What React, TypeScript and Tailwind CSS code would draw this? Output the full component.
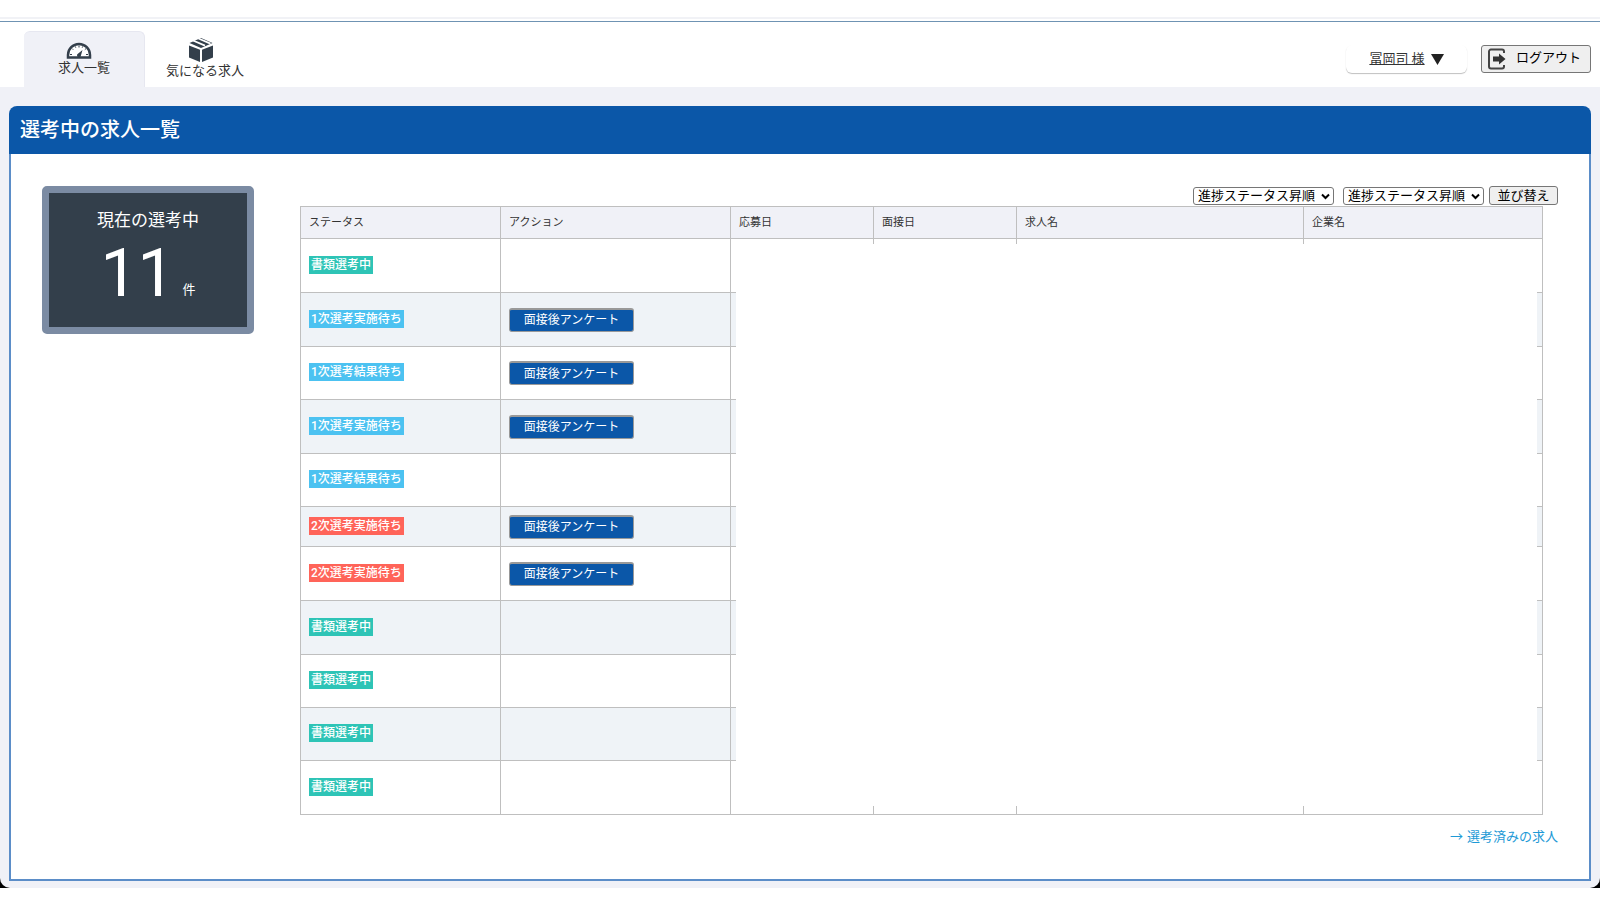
import { useState } from "react";

type Stage = "document" | "first" | "second";

type Row = {
  label: string;
  stage: Stage;
  survey: boolean;
  height: string;
};

const rows: Row[] = [
  { label: "書類選考中", stage: "document", survey: false, height: "h-[54px]" },
  { label: "1次選考実施待ち", stage: "first", survey: true, height: "h-[54px]" },
  { label: "1次選考結果待ち", stage: "first", survey: true, height: "h-[53px]" },
  { label: "1次選考実施待ち", stage: "first", survey: true, height: "h-[54px]" },
  { label: "1次選考結果待ち", stage: "first", survey: false, height: "h-[53px]" },
  { label: "2次選考実施待ち", stage: "second", survey: true, height: "h-[40px]" },
  { label: "2次選考実施待ち", stage: "second", survey: true, height: "h-[54px]" },
  { label: "書類選考中", stage: "document", survey: false, height: "h-[54px]" },
  { label: "書類選考中", stage: "document", survey: false, height: "h-[53px]" },
  { label: "書類選考中", stage: "document", survey: false, height: "h-[53px]" },
  { label: "書類選考中", stage: "document", survey: false, height: "h-[54px]" },
];

const stageColors: Record<Stage, string> = {
  document: "bg-[#2ec4b6]",
  first: "bg-[#4cc2f1]",
  second: "bg-[#ff6459]",
};

const columns = [
  { name: "ステータス", width: "w-[200px]" },
  { name: "アクション", width: "w-[230px]" },
  { name: "応募日", width: "w-[143px]" },
  { name: "面接日", width: "w-[143px]" },
  { name: "求人名", width: "w-[287px]" },
  { name: "企業名", width: "" },
];

const GaugeIcon = () => (
  <svg className="mr-2.5" width="26" height="18" viewBox="0 0 26 18" fill="none" aria-hidden="true">
    <path d="M2 15.500V13a11 11 0 0 1 22 0v2.500z" fill="#fff" stroke="#333f4b" strokeWidth="2.500" />
    <path d="M13 3.500v2M6 6.500l1.200 1.200M20 6.500l-1.200 1.200M4 12.500h2M20 12.500h2M9.200 4.300l.6 1.400M16.800 4.300l-.6 1.400" stroke="#333f4b" strokeWidth="1" />
    <path d="M16.500 8l-1.500 5.300a2 2 0 1 1-2.800-1.800z" fill="#333f4b" />
  </svg>
);

const BoxIcon = () => (
  <svg className="mr-2" width="26" height="26" viewBox="0 0 26 26" fill="#333f4b" aria-hidden="true">
    <path d="M1 8.500l11 4.300V25L1 20.500z" />
    <path d="M25 8.500l-11 4.300V25l11-4.500z" />
    <path d="M13 1l11.500 5L13 11 1.500 6z" />
    <path d="M5 3.500l12 5.200M10.500 1.500l12 5.200" stroke="#fff" strokeWidth="1.800" />
  </svg>
);

const LogoutIcon = () => (
  <svg width="18" height="22" viewBox="0 0 18 22" fill="none" aria-hidden="true">
    <path d="M16 5V3.500A2 2 0 0 0 14 1.500H3a2 2 0 0 0-2 2v15a2 2 0 0 0 2 2h11a2 2 0 0 0 2-2V17" stroke="#444" strokeWidth="2" />
    <path d="M5 8.500h6V5.500l6.500 5.500-6.500 5.500v-3H5z" fill="#333" />
  </svg>
);

const SortSelect = ({ label }: { label: string }) => {
  const [value, setValue] = useState("status_asc");

  return (
    <div className="relative flex">
      <select
        aria-label={label}
        value={value}
        onChange={(e) => setValue(e.target.value)}
        className="h-[18px] w-[141px] appearance-none rounded-[3px] border border-[#767676] bg-white pl-1 text-[13px] leading-4 text-black"
      >
        <option value="status_asc">進捗ステータス昇順</option>
        <option value="status_desc">進捗ステータス降順</option>
      </select>
      <svg className="pointer-events-none absolute right-1 top-1.5" width="9" height="7" viewBox="0 0 9 7" fill="none" aria-hidden="true">
        <path d="M1 1.500l3.500 3.500L8 1.500" stroke="#000" strokeWidth="2" />
      </svg>
    </div>
  );
};

const Header = () => (
  <header className="bg-white pt-[17px]">
    <div className="h-[5px] border-b border-t-2 border-b-[#6f93b3] border-t-[#f1f2f6]" />
    <div className="flex h-[65px] items-end justify-between pl-6 pr-[9px]">
      <nav className="flex">
        <a href="#jobs" className="flex h-14 w-[121px] flex-col items-center rounded-t-md border-r border-t border-[#e6e7f0] bg-[#f0f1f7] pt-2.5">
          <GaugeIcon />
          <span className="text-[13px] leading-4">求人一覧</span>
        </a>
        <a href="#favorites" className="flex h-14 w-[120px] flex-col items-center pt-[6px]">
          <BoxIcon />
          <span className="text-[13px] leading-4">気になる求人</span>
        </a>
      </nav>
      <div className="flex items-center gap-3.5 pb-3.5">
        <button type="button" className="flex h-7 w-[121px] items-center justify-center gap-1.5 rounded-md bg-white text-[13px] shadow-[0_1px_1px_rgba(0,0,0,0.25)]">
          <span className="underline">冨岡司 様</span>
          <svg width="13" height="11" viewBox="0 0 13 11" aria-hidden="true">
            <path d="M0 0h13L6.500 11z" fill="#222" />
          </svg>
        </button>
        <button type="button" className="flex h-7 w-[110px] items-center gap-2.5 rounded-[3px] border border-[#767676] bg-[#efefef] pl-1.5 text-[13px] text-black">
          <LogoutIcon />
          <span className="pb-0.5">ログアウト</span>
        </button>
      </div>
    </div>
  </header>
);

const JobTable = () => (
  <div className="relative">
    <table className="w-full table-fixed border-collapse text-left text-[11px]">
      <thead>
        <tr className="h-8 bg-[#f0f1f7]">
          {columns.map((column) => (
            <th key={column.name} className={`border border-[#bfbfbf] px-2 pt-0.5 font-normal ${column.width}`}>
              {column.name}
            </th>
          ))}
        </tr>
      </thead>
      <tbody>
        {rows.map((row, index) => (
          <tr key={index} className={`even:bg-[#eff3f7] ${row.height}`}>
            <td className="border border-[#bfbfbf] px-2 pb-0.5">
              <span className={`block w-fit px-0.5 text-[12px] font-medium leading-[18px] text-white ${stageColors[row.stage]}`}>{row.label}</span>
            </td>
            <td className="border border-[#bfbfbf] px-2">
              {row.survey && (
                <button type="button" className="block h-6 w-[125px] rounded-[3px] border border-t-2 border-[#999] bg-[#0b57a8] text-[12px] leading-4 text-white">
                  面接後アンケート
                </button>
              )}
            </td>
            <td className="border border-[#bfbfbf]" />
            <td className="border border-[#bfbfbf]" />
            <td className="border border-[#bfbfbf]" />
            <td className="border border-[#bfbfbf]" />
          </tr>
        ))}
      </tbody>
    </table>
    {/* mask for the private columns */}
    <div className="absolute bottom-[9px] left-[436px] right-1.5 top-[38px] bg-white" />
  </div>
);

const App = () => {
  return (
    <div className="min-h-screen bg-white font-[Roboto,'Noto_Sans_CJK_JP',sans-serif] text-[#333]">
      <div className="bg-black">
        <div className="overflow-hidden rounded-b-[10px] bg-[#f0f1f7] pb-[7px]">
          <Header />
          <main className="mx-[9px] mt-[19px]">
            <h1 className="h-12 rounded-t-lg bg-[#0b57a8] pl-[11px] text-[20px] font-medium leading-[48px] text-white">選考中の求人一覧</h1>
            <div className="flex items-start gap-[46px] border-2 border-t-0 border-[#5b8dc8] bg-white pb-8 pl-[31px] pr-[31px] pt-8">
              <section className="h-[148px] w-[212px] shrink-0 rounded-[5px] border-[7px] border-[#7b8ba3] bg-[#333f4b] text-center text-white">
                <h2 className="pt-[15px] text-[17px] leading-6">現在の選考中</h2>
                <p className="flex items-end justify-center gap-2 pt-2.5">
                  <span className="text-[66px] leading-[64px]">11</span>
                  <span className="pb-1.5 text-[13px] leading-5">件</span>
                </p>
              </section>
              <section className="min-w-0 flex-1">
                <div className="flex items-center justify-end pb-px">
                  <div className="flex items-center gap-[9px]">
                    <SortSelect label="並び順1" />
                    <SortSelect label="並び順2" />
                  </div>
                  <button type="button" className="ml-[5px] h-[19px] w-[69px] rounded-[3px] border border-[#767676] bg-[#efefef] text-[13px] leading-4 text-black">
                    並び替え
                  </button>
                </div>
                <div className="pr-[15px]">
                  <JobTable />
                </div>
                <a href="#finished" className="mt-3 flex justify-end gap-1 text-[13px] leading-5 text-[#1e9ad6]">
                  <span>→</span>
                  <span>選考済みの求人</span>
                </a>
              </section>
            </div>
          </main>
        </div>
      </div>
    </div>
  );
};

export default App;
